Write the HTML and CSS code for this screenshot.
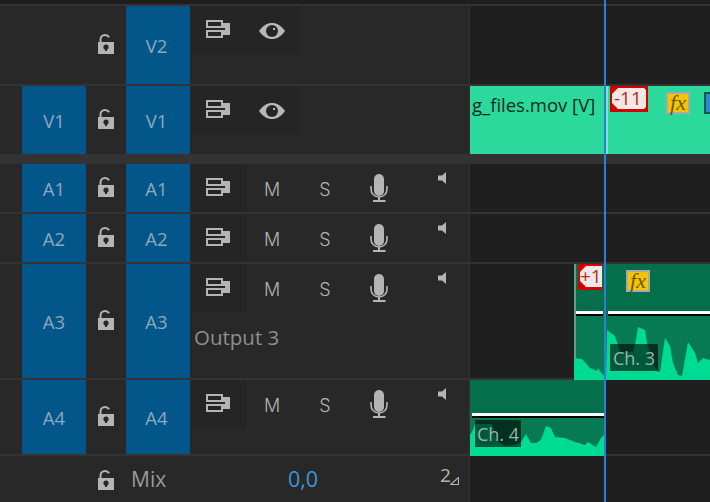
FILE: index.html
```html
<!DOCTYPE html>
<html lang="en">
<head>
<meta charset="utf-8">
<title>Timeline</title>
<link rel="stylesheet" href="styles.css">
</head>
<body>
<svg class="defs" width="0" height="0" aria-hidden="true">
  <symbol id="seq" viewBox="0 0 24 18">
    <path d="M0 0h17v8H0zM2 2v4h13V2zM0 10h17v8H0zM2 12v4h13v-4z" fill-rule="evenodd" fill="#b4b4b4"/>
    <path d="M17 3h7v12h-7V10h2V8h-2z" fill="#b4b4b4"/>
  </symbol>
  <symbol id="eye" viewBox="0 0 26 16">
    <path d="M0 8C4 2.500 8 0 13 0s9 2.500 13 8c-4 5.500-8 8-13 8S4 13.500 0 8z" fill="#b8b8b8"/>
    <circle cx="13" cy="8" r="6" fill="#262626"/>
    <rect x="14" y="5" width="2" height="2" fill="#b8b8b8"/>
  </symbol>
  <symbol id="lock" viewBox="0 0 16 20">
    <path d="M0 8h16v12H0z" fill="#b4b4b4"/>
    <path d="M2.500 8V5.500C2.500 2.800 4.500 1 7 1c1.800 0 3.300.7 4.200 2.200" fill="none" stroke="#b4b4b4" stroke-width="2"/>
    <circle cx="8" cy="13" r="2.600" fill="#262626"/>
    <path d="M7 13h2v4H7z" fill="#262626"/>
  </symbol>
  <symbol id="mic" viewBox="0 0 18 28">
    <rect x="4" y="0" width="10" height="22" rx="5" fill="#b4b4b4"/>
    <path d="M1 12v3c0 4.800 3.500 8 8 8s8-3.200 8-8v-3" fill="none" stroke="#b4b4b4" stroke-width="1.600"/>
    <path d="M8 23h2v3H8zM3 26h12.500v2H3z" fill="#b4b4b4"/>
  </symbol>
  <symbol id="spk" viewBox="0 0 8 12">
    <path d="M8 0v12L4 8.500H0v-5h4z" fill="#b4b4b4"/>
  </symbol>
</svg>

<main class="tl">
  <div class="top"></div>

  <section class="row h78">
    <div class="head">
      <div></div>
      <div class="lockc"><svg class="lock"><use href="#lock"/></svg></div>
      <div class="tag">V2</div>
      <div class="ctrl">
        <div class="box video">
          <div class="cell"><svg class="seq"><use href="#seq"/></svg></div>
          <div class="cell eyec"><svg class="eye"><use href="#eye"/></svg></div>
        </div>
      </div>
    </div>
    <div class="lane"></div>
  </section>

  <section class="row h68 noline">
    <div class="head">
      <div class="tag">V1</div>
      <div class="lockc"><svg class="lock"><use href="#lock"/></svg></div>
      <div class="tag">V1</div>
      <div class="ctrl">
        <div class="box video">
          <div class="cell"><svg class="seq"><use href="#seq"/></svg></div>
          <div class="cell eyec"><svg class="eye"><use href="#eye"/></svg></div>
        </div>
      </div>
    </div>
    <div class="lane">
      <div class="clip video-clip">
        <span class="name">g_files.mov [V]</span>
        <i class="sliver"></i>
        <span class="badge b-v">-11</span>
        <span class="fx fx-v">fx</span>
        <i class="chip"></i>
      </div>
    </div>
  </section>

  <div class="band"></div>

  <section class="row h48">
    <div class="head">
      <div class="tag">A1</div>
      <div class="lockc"><svg class="lock"><use href="#lock"/></svg></div>
      <div class="tag">A1</div>
      <div class="ctrl">
        <div class="box"><div class="cell"><svg class="seq"><use href="#seq"/></svg></div></div>
        <div class="cell m">M</div><div class="cell s">S</div>
        <div class="cell mc"><svg class="mic"><use href="#mic"/></svg></div>
        <div class="spkc"><svg class="spk"><use href="#spk"/></svg></div>
      </div>
    </div>
    <div class="lane"></div>
  </section>

  <section class="row h48">
    <div class="head">
      <div class="tag">A2</div>
      <div class="lockc"><svg class="lock"><use href="#lock"/></svg></div>
      <div class="tag">A2</div>
      <div class="ctrl">
        <div class="box"><div class="cell"><svg class="seq"><use href="#seq"/></svg></div></div>
        <div class="cell m">M</div><div class="cell s">S</div>
        <div class="cell mc"><svg class="mic"><use href="#mic"/></svg></div>
        <div class="spkc"><svg class="spk"><use href="#spk"/></svg></div>
      </div>
    </div>
    <div class="lane"></div>
  </section>

  <section class="row h114">
    <div class="head">
      <div class="tag">A3</div>
      <div class="lockc"><svg class="lock"><use href="#lock"/></svg></div>
      <div class="tag">A3</div>
      <div class="ctrl wrap">
        <div class="box"><div class="cell"><svg class="seq"><use href="#seq"/></svg></div></div>
        <div class="cell m">M</div><div class="cell s">S</div>
        <div class="cell mc"><svg class="mic"><use href="#mic"/></svg></div>
        <div class="spkc"><svg class="spk"><use href="#spk"/></svg></div>
        <div class="output">Output 3</div>
      </div>
    </div>
    <div class="lane">
      <div class="clip a3">
        <svg class="wave" viewBox="574 264 136 116" width="136" height="116">
          <path fill="#00db94" d="M574 380V358L582 359 590 368 597 371 598 368 603 375 606 377 607 330 615 336 620 352 633 352 636 340 638 327 645 330 647 343 652 362 658 372 660 372 665 338 670 346 673 363 678 375 682 376 688 342 695 353 698 363 703 358 710 360V380Z"/>
        </svg>
        <div class="level l-a3"></div>
        <i class="gap"></i>
        <span class="badge b-a">+1</span>
        <span class="fx fx-a">fx</span>
        <span class="ch ch3">Ch. 3</span>
      </div>
    </div>
  </section>

  <section class="row h74">
    <div class="head">
      <div class="tag">A4</div>
      <div class="lockc"><svg class="lock"><use href="#lock"/></svg></div>
      <div class="tag">A4</div>
      <div class="ctrl">
        <div class="box"><div class="cell"><svg class="seq"><use href="#seq"/></svg></div></div>
        <div class="cell m">M</div><div class="cell s">S</div>
        <div class="cell mc"><svg class="mic"><use href="#mic"/></svg></div>
        <div class="spkc"><svg class="spk"><use href="#spk"/></svg></div>
      </div>
    </div>
    <div class="lane">
      <div class="clip a4">
        <svg class="wave" viewBox="470 380 134 76" width="134" height="76">
          <path fill="#00db94" d="M470 456V435L473 430 475 424 492 424 497 441 505 446 515 445 521 442 526 434 531 443 536 443 541 440 546 426 551 428 555 437 565 438 575 442 585 445 588 442 596 447 601 438 604 435V456Z"/>
        </svg>
        <div class="level l-a4"></div>
        <span class="ch ch4">Ch. 4</span>
      </div>
    </div>
  </section>

  <section class="row mix">
    <div class="head mixhead">
      <div class="mixlock"><svg class="lock"><use href="#lock"/></svg></div>
      <div class="mixname">Mix</div>
      <div class="mixval">0,0</div>
      <div class="mixnum"><span>2</span><svg class="tri" viewBox="0 0 9 8"><path d="M8.500 0.500V7.500H0.500Z" fill="none" stroke="#b4b4b4" stroke-width="1.200"/></svg></div>
    </div>
    <div class="lane"></div>
  </section>

  <div class="playhead"></div>
</main>
</body>
</html>
```
FILE: styles.css
```css
* { box-sizing: border-box; }
html, body { margin: 0; height: 100%; background: #1f1f1f; overflow: hidden; }
body { font-family: "Open Sans", "Noto Sans", sans-serif; }
.defs { position: absolute; }

.tl { position: relative; width: 710px; height: 502px; display: flex; flex-direction: column; overflow: hidden; }
.top { height: 6px; flex: none; background: #1e1e1e; border-bottom: 2px solid #333; }

.row { flex: none; display: grid; grid-template-columns: 470px 240px; grid-template-rows: minmax(0, 1fr); border-bottom: 2px solid #333; }
.noline { border-bottom: 0; }
.h78 { height: 80px; }
.h68 { height: 68px; }
.h48 { height: 50px; }
.h114 { height: 116px; }
.h74 { height: 76px; }
.mix { flex: 1; border-bottom: 0; }
.band { height: 10px; flex: none; background: #333; }

.head { display: grid; grid-template-columns: 22px 64px 40px 64px 1fr; background: #282828; border-right: 1px solid #333; min-height: 0; }
.tag { background: #03568a; color: #8ba9bf; font-size: 18.5px; display: flex; align-items: center; justify-content: center; }
.lockc + .tag { padding-right: 3px; }
.head > .tag:first-child { grid-column: 2; }
.head > .tag:first-child + .lockc { grid-column: 3; }
.head > div:first-child:empty { grid-column: 1 / span 2; }
.lockc { display: flex; align-items: center; justify-content: center; padding-bottom: 3px; }
.lock { width: 16px; height: 20px; display: block; }

.ctrl { display: flex; align-items: flex-start; position: relative; }
.wrap { flex-wrap: wrap; align-content: flex-start; }
.box { display: flex; width: 56px; height: 48px; background: #252525; flex: none; }
.box.video { width: 110px; }
.cell { width: 56px; height: 48px; flex: none; display: flex; justify-content: center; padding-top: 14px; }
.eyec { width: 52px; padding-top: 17px; }
.seq { width: 24px; height: 18px; display: block; }
.eye { width: 26px; height: 16px; display: block; }
.m, .s { font-family: "Inter", sans-serif; font-weight: 300; font-size: 18px; line-height: 22px; color: #b4b4b4; }
.m { width: 52px; padding-top: 15px; }
.s { width: 54px; padding-top: 15px; }
.mc { width: 54px; padding-top: 10px; }
.mic { width: 18px; height: 28px; display: block; }
.spkc { padding: 8px 0 0 32px; }
.spk { width: 8px; height: 12px; display: block; }
.output { width: 100%; padding-left: 4px; margin-top: 11px; font-size: 20.5px; line-height: 28px; color: #8f8f8f; }

.lane { position: relative; min-width: 0; min-height: 0; }
.clip { position: relative; }
.video-clip { width: 240px; height: 68px; background: #2cd99c; }
.name { position: absolute; left: 2px; top: 5px; font-size: 18.5px; line-height: 27px; color: #0d2a20; white-space: nowrap; }
.sliver { position: absolute; left: 136px; top: 0; width: 2px; height: 68px; background: #7be8c4; }

.badge { position: absolute; height: 26px; background: #d40000; color: #b4301c; font-size: 19px; line-height: 24px; isolation: isolate; white-space: nowrap; }
.badge::before { content: ""; position: absolute; z-index: -1; left: 2px; top: 2px; right: 2px; bottom: 3px; background: #f1e7e4; clip-path: polygon(6px 0, calc(100% - 2px) 0, 100% 2px, 100% calc(100% - 2px), calc(100% - 2px) 100%, 6px 100%, 0 calc(100% - 6px), 0 6px); }
.b-v { left: 140px; top: 0; width: 38px; padding-left: 4px; }
.b-a { left: 4px; top: 0; width: 24px; padding-left: 2px; }
.b-a::before { right: 0; clip-path: polygon(6px 0, 100% 0, 100% 100%, 6px 100%, 0 calc(100% - 6px), 0 6px); }
.fx { position: absolute; width: 24px; height: 22px; background: #f5c400; border: 2px solid #a9a9a9; color: #6a5800; font-family: "Liberation Serif", serif; font-style: italic; font-size: 22px; line-height: 17px; text-align: center; }
.fx-v { left: 196px; top: 6px; }
.fx-a { left: 52px; top: 6px; }
.chip { position: absolute; left: 234px; top: 6px; width: 10px; height: 22px; background: #2e88d6; border: 2px solid #0c5a4c; }

.a3 { width: 136px; height: 116px; margin-left: 104px; background: linear-gradient(#056f4b 0 41%, #087a53 41%); box-shadow: inset 2px 0 0 #5a9f88; }
.a4 { width: 134px; height: 76px; background: linear-gradient(#056f4b 0 45%, #087a53 45%); }
.wave { position: absolute; left: 0; top: 0; display: block; }
.level { position: absolute; height: 5px; background: linear-gradient(#fff 0 3px, #000 3px); }
.l-a3 { left: 2px; right: 0; top: 47px; }
.l-a4 { left: 2px; right: 0; top: 33px; }
.gap { position: absolute; left: 29px; top: 45px; width: 5px; height: 8px; background: #056f4b; }
.ch { position: absolute; background: rgba(0, 0, 0, .6); color: #95b8a9; font-size: 18px; line-height: 29px; height: 27px; text-align: center; }
.ch3 { left: 36px; top: 80px; width: 48px; }
.ch4 { left: 5px; top: 40px; width: 46px; }

.mixhead { display: flex; align-items: center; position: relative; padding-left: 98px; }
.mixlock { padding-top: 2px; width: 33px; flex: none; }
.mixname { width: 157px; flex: none; font-size: 21px; line-height: 28px; color: #9a9a9a; }
.mixval { width: 152px; flex: none; font-size: 21.5px; line-height: 28px; color: #3f94db; }
.mixnum { display: flex; align-items: flex-end; color: #b4b4b4; font-size: 19px; line-height: 22px; margin-top: -9px; }
.tri { width: 9px; height: 8px; display: block; margin: 0 0 1px -1px; }

.playhead { position: absolute; left: 604px; top: 0; bottom: 0; width: 2px; background: #2c7fd4; z-index: 3; }
```
